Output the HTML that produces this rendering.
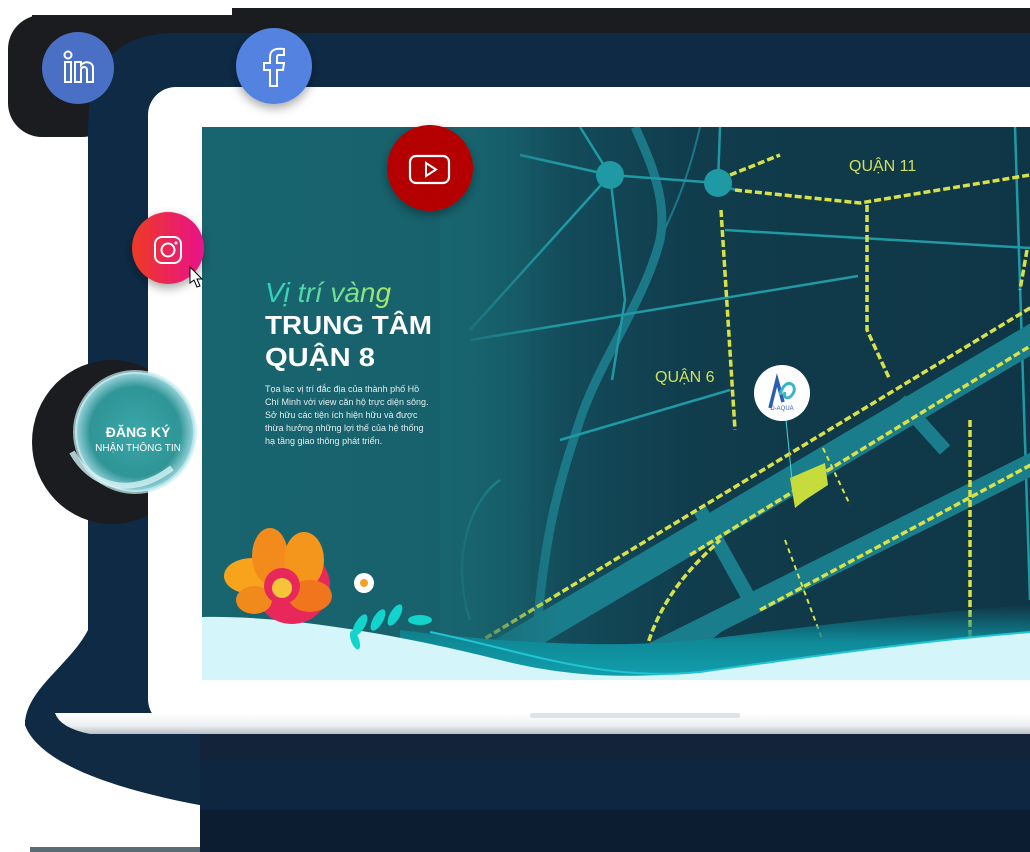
<!DOCTYPE html>
<html><head><meta charset="utf-8"><style>
html,body{margin:0;padding:0;background:#fff;width:1030px;height:852px;overflow:hidden}
svg{display:block}
text{font-family:"Liberation Sans",sans-serif}
</style></head><body>
<svg width="1030" height="852" viewBox="0 0 1030 852" xmlns="http://www.w3.org/2000/svg">
<defs>
<linearGradient id="scr" x1="0" y1="0" x2="1" y2="0">
<stop offset="0" stop-color="#18656f"/><stop offset="0.3" stop-color="#17616c"/><stop offset="0.45" stop-color="#134a59"/><stop offset="0.6" stop-color="#103c4c"/><stop offset="1" stop-color="#0f3646"/></linearGradient>
<linearGradient id="fade" x1="0" y1="0" x2="1" y2="0"><stop offset="0" stop-color="#18656f" stop-opacity="1"/><stop offset="1" stop-color="#18656f" stop-opacity="0"/></linearGradient>
<linearGradient id="band" x1="0" y1="0" x2="0" y2="1"><stop offset="0" stop-color="#0f8a98" stop-opacity="0"/><stop offset="0.5" stop-color="#0f8a98"/><stop offset="1" stop-color="#12a0ae"/></linearGradient>
<linearGradient id="ig" x1="0" y1="0" x2="1" y2="0"><stop offset="0" stop-color="#ee3a24"/><stop offset="1" stop-color="#e8128a"/></linearGradient>
<linearGradient id="base" x1="0" y1="0" x2="0" y2="1"><stop offset="0" stop-color="#ffffff"/><stop offset="0.6" stop-color="#eceff2"/><stop offset="1" stop-color="#b9c0c6"/></linearGradient>
<linearGradient id="vt" x1="0" y1="0" x2="1" y2="0"><stop offset="0" stop-color="#2ad0c0"/><stop offset="1" stop-color="#a8e86a"/></linearGradient>
<radialGradient id="dk" cx="0.5" cy="0.5" r="0.5"><stop offset="0" stop-color="#3aa6a8"/><stop offset="0.75" stop-color="#2f9597"/><stop offset="1" stop-color="#9fd7de"/></radialGradient>
<clipPath id="sc"><rect x="202" y="127" width="828" height="553"/></clipPath>
<filter id="sh" x="-30%" y="-30%" width="160%" height="160%"><feDropShadow dx="0" dy="4" stdDeviation="5" flood-color="#000" flood-opacity="0.35"/></filter>
</defs>

<rect x="232" y="8" width="798" height="40" fill="#1b1c1f"/>
<rect x="32" y="15" width="220" height="40" fill="#1b1c1f"/>
<rect x="8" y="15" width="108" height="122" rx="34" fill="#1b1c1f"/>
<path d="M88 130 Q88 33 175 33 L1030 33 L1030 852 L200 852 L200 805 C120 790 40 765 25 725 C25 690 70 665 88 630 Z" fill="#0e2a45"/>
<ellipse cx="112" cy="442" rx="80" ry="82" fill="#1b1c1f"/>
<path d="M25 725 C40 765 120 790 200 805 L200 735 L25 720 Z" fill="#0f2a42"/>
<rect x="200" y="733" width="830" height="40" fill="#13233a"/>
<rect x="200" y="760" width="830" height="92" fill="#0f2640"/>
<rect x="200" y="810" width="830" height="42" fill="#0c1d31"/>
<rect x="30" y="847" width="170" height="5" fill="#5a6b74"/>

<rect x="148" y="87" width="920" height="640" rx="28" fill="#ffffff"/>
<path d="M55 713 L1030 713 L1030 734 L90 734 Q60 728 55 713 Z" fill="url(#base)"/>
<rect x="530" y="713" width="210" height="5" rx="2" fill="#dfe3e6"/>

<g clip-path="url(#sc)">
<rect x="202" y="127" width="828" height="553" fill="url(#scr)"/>
<path d="M635 127 C650 160 668 200 660 240 C645 300 600 360 580 420 C560 480 540 540 534 680" stroke="#1b7887" stroke-width="9" fill="none"/>
<path d="M700 127 C690 170 680 200 650 260" stroke="#1b7887" stroke-width="2" fill="none"/>
<g stroke="#1f9aa5" stroke-width="2.5" fill="none">
<path d="M520 155 L610 175 L718 183 L735 190"/>
<path d="M610 175 L580 127"/><path d="M610 175 L470 330"/><path d="M610 175 L625 300 L612 380"/>
<path d="M720 127 L718 183"/>
<path d="M725 230 L1030 248"/>
<path d="M470 340 L858 276"/>
<path d="M560 440 L730 390"/>
<path d="M500 480 C470 500 450 560 470 620"/>
<path d="M1015 127 L1030 600"/>
</g>
<path d="M420 700 L1060 322" stroke="#1a7d8b" stroke-width="28" fill="none"/>
<path d="M640 660 L1060 450" stroke="#1a7d8b" stroke-width="22" fill="none"/>
<path d="M700 510 L750 600 L700 640" stroke="#1a7d8b" stroke-width="14" fill="none"/>
<path d="M900 400 L945 450" stroke="#1a7d8b" stroke-width="14" fill="none"/>
<g stroke="#d8e04a" stroke-width="3.5" fill="none" stroke-dasharray="7 3">
<path d="M400 690 L1040 302"/>
<path d="M690 555 L1040 340"/>
<path d="M735 190 L860 203 L1030 175"/>
<path d="M721 210 L735 430"/>
<path d="M867 205 L867 330 L890 380"/>
<path d="M1027 250 L1020 290"/>
<path d="M970 420 L970 660"/>
<path d="M760 610 L1040 460"/>
<path d="M640 680 C650 600 700 560 720 540"/>
<path d="M730 175 L780 155"/>
</g>
<g stroke="#d8e04a" stroke-width="2" fill="none" stroke-dasharray="5 4">
<path d="M823 448 L850 505"/><path d="M785 540 L830 660"/>
</g>
<rect x="440" y="127" width="120" height="553" fill="url(#fade)"/>
<circle cx="610" cy="175" r="14" fill="#1f9aa5"/>
<circle cx="718" cy="183" r="14" fill="#1f9aa5"/>
<path d="M790 478 L825 463 L828 485 L805 500 L795 508 Z" fill="#c6dc3c"/>
<line x1="786" y1="420" x2="792" y2="480" stroke="#4bd3d3" stroke-width="1"/>
<text x="849" y="171" font-size="16" fill="#cfe05a">QUẬN 11</text>
<text x="655" y="382" font-size="16" fill="#cfe05a">QUẬN 6</text>
<circle cx="782" cy="393" r="28" fill="#fff"/>
<path d="M770 408 L777 380 L783 402" stroke="#2a5fb0" stroke-width="3.5" fill="none"/>
<path d="M780 395 C785 375 800 385 792 395 C788 400 783 398 785 392" stroke="#38b6c8" stroke-width="3" fill="none"/>
<text x="782" y="410" font-size="6" fill="#2a5fb0" text-anchor="middle">D-AQUA</text>
<path d="M400 630 C480 640 600 650 700 640 C820 625 930 612 1030 605 L1030 680 L400 680 Z" fill="url(#band)"/>
<path d="M202 617 C300 615 420 640 500 660 C560 675 620 680 700 672 C820 655 930 640 1030 632 L1030 680 L202 680 Z" fill="#d4f5fa"/>
<path d="M430 632 C520 650 600 682 700 672 C820 655 930 640 1030 632" stroke="#20c4d2" stroke-width="2" fill="none"/>
<g transform="translate(282,578)">
<circle cx="10" cy="8" r="38" fill="#e8275a"/>
<ellipse cx="-30" cy="-2" rx="28" ry="18" fill="#f7a41c"/>
<ellipse cx="-12" cy="-22" rx="18" ry="28" fill="#f38a1c"/>
<ellipse cx="22" cy="-18" rx="20" ry="28" fill="#f5961c"/>
<ellipse cx="-28" cy="22" rx="18" ry="14" fill="#f08a1c"/>
<ellipse cx="28" cy="18" rx="22" ry="16" fill="#f0751c"/>
<circle cx="0" cy="8" r="18" fill="#e8275a"/>
<circle cx="0" cy="10" r="10" fill="#f7c53a"/>
</g>
<circle cx="364" cy="583" r="10" fill="#fff"/><circle cx="364" cy="583" r="4" fill="#f3a02a"/>
<g fill="#12d4cc"><ellipse cx="360" cy="625" rx="5" ry="12" transform="rotate(30 360 625)"/><ellipse cx="378" cy="620" rx="5" ry="12" transform="rotate(30 378 620)"/><ellipse cx="395" cy="615" rx="5" ry="12" transform="rotate(30 395 615)"/><ellipse cx="420" cy="620" rx="12" ry="5"/><ellipse cx="355" cy="640" rx="4" ry="10" transform="rotate(-20 355 640)"/></g>
<text x="265" y="302" font-family="Liberation Serif,serif" font-style="italic" font-size="28" fill="url(#vt)">Vị trí vàng</text>
<text x="265" y="334" font-size="26" font-weight="bold" fill="#fff" textLength="167" lengthAdjust="spacingAndGlyphs">TRUNG TÂM</text>
<text x="265" y="366" font-size="26" font-weight="bold" fill="#fff" textLength="110" lengthAdjust="spacingAndGlyphs">QUẬN 8</text>
<g font-size="9" fill="#e3eef0">
<text x="265" y="392">Tọa lạc vị trí đắc địa của thành phố Hồ</text>
<text x="265" y="405">Chí Minh với view căn hộ trực diện sông.</text>
<text x="265" y="418">Sở hữu các tiện ích hiện hữu và được</text>
<text x="265" y="431">thừa hưởng những lợi thế của hệ thống</text>
<text x="265" y="444">hạ tầng giao thông phát triển.</text>
</g>
</g>

<circle cx="78" cy="68" r="36" fill="#4a70c6"/>
<g stroke="#fff" stroke-width="2" fill="none"><circle cx="68" cy="55" r="3.5"/><rect x="65" y="62" width="6" height="20"/><path d="M75 82 V62 H81 V65 C84 61 93 61 93 68 V82 H87 V70 C87 66 81 66 81 70 V82 Z"/></g>
<circle cx="274" cy="66" r="38" fill="#5282e0" filter="url(#sh)"/>
<path d="M270 86 V70 H264 V63 H270 V57 C270 50 275 48 284 49 V55 H279 C277 55 277 56 277 58 V63 H284 L283 70 H277 V86 Z" stroke="#fff" stroke-width="2" fill="none"/>
<circle cx="430" cy="168" r="43" fill="#b40000" filter="url(#sh)"/>
<rect x="410" y="156" width="39" height="27" rx="6" stroke="#fff" stroke-width="2.2" fill="none"/>
<path d="M426 163 L436 169.5 L426 176 Z" stroke="#fff" stroke-width="2" fill="none"/>
<circle cx="168" cy="248" r="36" fill="url(#ig)" filter="url(#sh)"/>
<rect x="155" y="237" width="26" height="26" rx="7" stroke="#fff" stroke-width="2" fill="none"/>
<circle cx="168" cy="250" r="6.5" stroke="#fff" stroke-width="2" fill="none"/>
<circle cx="176" cy="243" r="1.5" fill="#fff"/>
<path d="M190 267 V283 L194 280 L197 287 L200 286 L197 279 L202 279 Z" fill="#fff" stroke="#000" stroke-width="1"/>
<circle cx="135" cy="432" r="60" fill="url(#dk)"/>
<circle cx="135" cy="432" r="60" fill="none" stroke="#c9eef2" stroke-width="4" opacity="0.7"/>
<path d="M72 452 C90 485 130 500 172 468" stroke="#d6f2f5" stroke-width="6" fill="none" opacity="0.8"/>
<text x="138" y="437" font-size="14" font-weight="bold" fill="#fff" text-anchor="middle">ĐĂNG KÝ</text>
<text x="138" y="451" font-size="10" fill="#fff" text-anchor="middle">NHẬN THÔNG TIN</text>
</svg>
</body></html>
